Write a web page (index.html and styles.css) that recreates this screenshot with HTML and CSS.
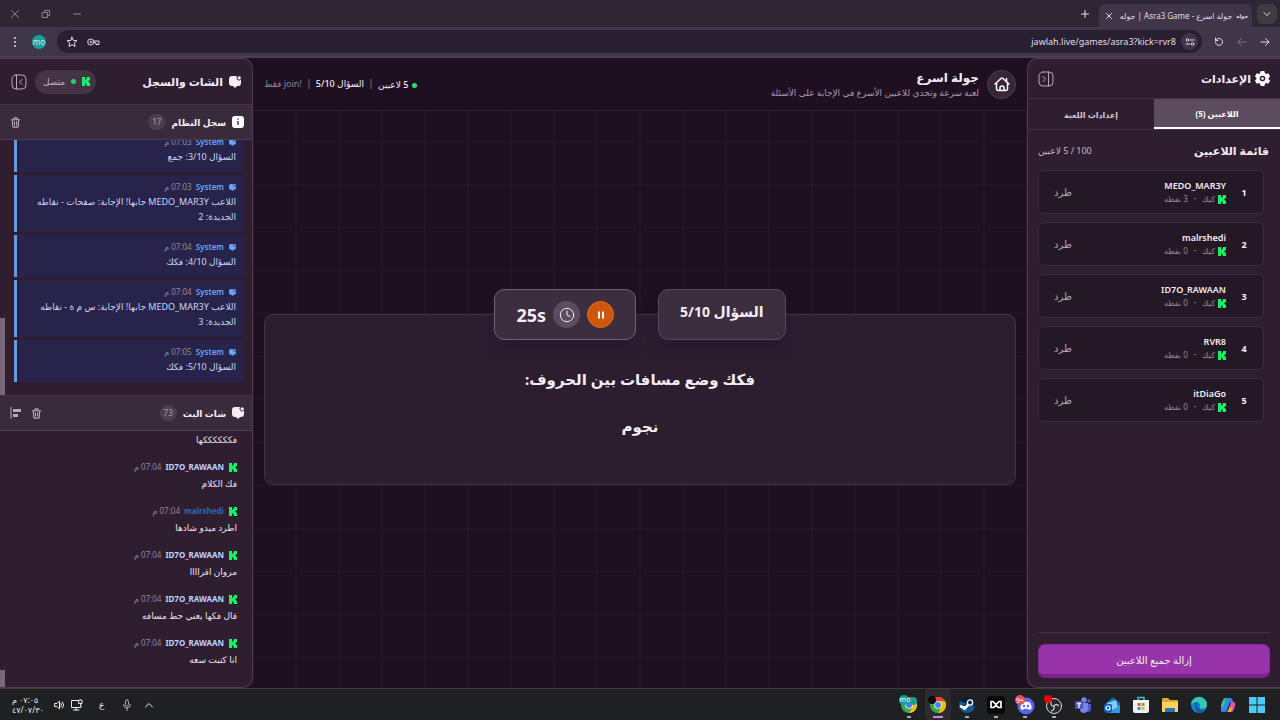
FILE: index.html
```html
<!DOCTYPE html>
<html lang="ar" dir="rtl">

<head>
    <meta charset="UTF-8">
    <meta name="viewport" content="width=device-width, initial-scale=1.0">
    <title>جولة اسرع - Asra3 Game | جوله</title>
    <link rel="stylesheet" href="styles.css">
</head>

<body>
    <!-- shared icons -->
    <svg class="defs" width="0" height="0" aria-hidden="true">
        <symbol id="kick" viewBox="0 0 9 10"><path fill="#19f065" d="M0 0h3.500v3h1V1.500h1V0H9v3.500H8v1H7v1h1v1h1V10H5.500V8.500h-1V7h-1v3H0z"/></symbol>
        <symbol id="chat" viewBox="0 0 12 12"><path fill="currentColor" d="M3 0h5.200a2.600 2.600 0 0 0 1 4.200q1.300.6 2.800-.4V7a3 3 0 0 1-3 3H8l-2 2-2-2H3a3 3 0 0 1-3-3V3a3 3 0 0 1 3-3z"/><circle cx="10.200" cy="1.900" r="1.700" fill="currentColor"/></symbol>
        <symbol id="trash" viewBox="0 0 12 12"><path fill="none" stroke="currentColor" stroke-width="1.200" stroke-linecap="round" stroke-linejoin="round" d="M1.500 3h9M4 3l.5-2h3L8 3M2.500 3l.5 7.200q.1.800 1 .8h4q.9 0 1-.8L9.500 3M4.800 5.300v3.400M7.200 5.300v3.400"/></symbol>
        <symbol id="chrome" viewBox="0 0 18 18"><circle cx="9" cy="9" r="9" fill="#34a853"/><path fill="#ea4335" d="M1.200 4.500A9 9 0 0 1 16.800 4.500L9 5 5.500 11z"/><path fill="#fbbc05" d="M16.800 4.500A9 9 0 0 1 9 18l4-7L9 5z"/><circle cx="9" cy="9" r="4.300" fill="#fff"/><circle cx="9" cy="9" r="3.400" fill="#4285f4"/></symbol>
    </svg>

    <div class="tabstrip">
        <button class="tab-search" aria-label="Search tabs"><svg width="10" height="10" viewBox="0 0 10 10"><path d="M2 3.500l3 3 3-3"/></svg></button>
        <div class="tab">
            <span class="favicon">جوله</span>
            <span class="tab-title">جولة اسرع - Asra3 Game | جوله</span>
            <button aria-label="Close tab"><svg width="8" height="8" viewBox="0 0 8 8"><path d="M1.500 1.500l5 5M6.500 1.500l-5 5"/></svg></button>
        </div>
        <button class="new-tab" aria-label="New tab"><svg width="10" height="10" viewBox="0 0 10 10"><path d="M5 1.500v7M1.500 5h7"/></svg></button>
        <div class="window-controls">
            <button aria-label="Minimize"><svg width="10" height="10" viewBox="0 0 10 10"><path d="M1.500 5h7"/></svg></button>
            <button aria-label="Restore"><svg width="10" height="10" viewBox="0 0 10 10"><path d="M1.500 3.500h5v5h-5zM3.500 3.500v-2h5v5h-2"/></svg></button>
            <button aria-label="Close"><svg width="10" height="10" viewBox="0 0 10 10"><path d="M1.500 1.500l7 7M8.500 1.500l-7 7"/></svg></button>
        </div>
    </div>

    <div class="toolbar">
        <button aria-label="Back"><svg width="10" height="10" viewBox="0 0 10 10"><path d="M1 5h8M5.500 1.500L9 5 5.500 8.500"/></svg></button>
        <button class="dim" aria-label="Forward"><svg width="10" height="10" viewBox="0 0 10 10"><path d="M9 5H1M4.500 1.500L1 5l3.500 3.500"/></svg></button>
        <button aria-label="Reload"><svg width="10" height="10" viewBox="0 0 10 10"><path d="M1.500 5a3.500 3.500 0 1 0 1.200-2.700L1.500 3.500M1.500 1v2.500H4"/></svg></button>
        <div class="omnibox">
            <button class="site-info" aria-label="Site information"><svg width="10" height="10" viewBox="0 0 10 10"><circle cx="2.500" cy="3" r="1.300"/><path d="M5.500 3H9M1 7h3.500"/><circle cx="7.500" cy="7" r="1.300"/></svg></button>
            <input type="text" class="url" dir="ltr" aria-label="Address" value="jawlah.live/games/asra3?kick=rvr8">
            <button aria-label="Passwords"><svg width="13" height="10" viewBox="0 0 13 10"><circle cx="3.700" cy="5" r="3"/><circle cx="3.700" cy="5" r=".7"/><path d="M6.500 4H12v3.500H9V5.800H6.700"/></svg></button>
            <button aria-label="Bookmark"><svg width="12" height="12" viewBox="0 0 12 12"><path d="M6 1.200l1.400 3.200 3.500.3-2.600 2.300.8 3.500L6 8.700l-3.100 1.800.8-3.500L1.100 4.700l3.500-.3z"/></svg></button>
        </div>
        <button class="profile" aria-label="Profile">mo</button>
        <button aria-label="Menu"><svg width="10" height="12" viewBox="0 0 10 12"><path class="dots" d="M5 2v.01M5 6v.01M5 10v.01"/></svg></button>
    </div>

    <div class="app">
        <aside class="settings">
            <div class="settings-head">
                <svg width="15" height="15" viewBox="0 0 16 16"><path fill="#fff" fill-rule="evenodd" d="M6 0h4l.6 2.400 1.200.7 2.300-.7 2 3.500L14.400 7.500v1l1.700 1.600-2 3.500-2.300-.7-1.200.7L10 16H6l-.6-2.400-1.200-.7-2.300.7-2-3.500L1.600 8.500v-1L-.1 5.900l2-3.500 2.300.7 1.200-.7zM8 5a3 3 0 1 0 0 6 3 3 0 0 0 0-6z"/><circle cx="8" cy="8" r="1.400" fill="#fff"/></svg>
                <h2>الإعدادات</h2>
                <button class="collapse" aria-label="طي الإعدادات"><svg width="16" height="16" viewBox="0 0 16 16"><rect x="1" y="1" width="14" height="14" rx="4"/><path d="M10.500 1v14M5 5.500L7.500 8 5 10.500"/></svg></button>
            </div>
            <div class="settings-tabs">
                <button class="active">اللاعبين (5)</button>
                <button>إعدادات اللعبة</button>
            </div>
            <div class="players-head">
                <h3>قائمة اللاعبين</h3>
                <span>100 / 5 لاعبين</span>
            </div>
            <ul class="players">
                <li><b>1</b><div><strong>MEDO_MAR3Y</strong><p><svg width="8" height="9"><use href="#kick"/></svg>كيك <i>•</i> 3 نقطة</p></div><button>طرد</button></li>
                <li><b>2</b><div><strong>malrshedi</strong><p><svg width="8" height="9"><use href="#kick"/></svg>كيك <i>•</i> 0 نقطة</p></div><button>طرد</button></li>
                <li><b>3</b><div><strong>ID7O_RAWAAN</strong><p><svg width="8" height="9"><use href="#kick"/></svg>كيك <i>•</i> 0 نقطة</p></div><button>طرد</button></li>
                <li><b>4</b><div><strong>RVR8</strong><p><svg width="8" height="9"><use href="#kick"/></svg>كيك <i>•</i> 0 نقطة</p></div><button>طرد</button></li>
                <li><b>5</b><div><strong>itDiaGo</strong><p><svg width="8" height="9"><use href="#kick"/></svg>كيك <i>•</i> 0 نقطة</p></div><button>طرد</button></li>
            </ul>
            <div class="settings-foot">
                <button>إزالة جميع اللاعبين</button>
            </div>
        </aside>

        <main class="game">
            <header class="game-head">
                <a href="#" class="home" aria-label="الرئيسية"><svg width="16" height="16" viewBox="0 0 16 16"><path d="M1 8l6-5.500q1-.9 2 0L15 8M2.500 7v5.500q0 2 2 2h7q2 0 2-2V7M12.500 5.500v-3M6 14.500V12q0-2 2-2t2 2v2.500"/></svg></a>
                <div class="game-title">
                    <h1>جولة اسرع</h1>
                    <p>لعبة سرعة وتحدي للاعبين الأسرع في الإجابة على الأسئلة</p>
                </div>
                <div class="status">
                    <span class="online">5 لاعبين</span>
                    <span>السؤال 5/10</span>
                    <span class="muted"><bdi dir="ltr">join!</bdi> فقط</span>
                </div>
            </header>
            <div class="stage">
                <section class="question">
                    <div class="badges">
                        <div class="badge">السؤال 5/10</div>
                        <div class="badge timer">
                            <button class="pause" aria-label="إيقاف"><svg width="8" height="8" viewBox="0 0 8 8"><path d="M1 .5h2v7H1zM5 .5h2v7H5z"/></svg></button>
                            <span class="clock"><svg width="16" height="16" viewBox="0 0 16 16"><circle cx="8" cy="8" r="6.700"/><path d="M8 4v4l3 1.500"/></svg></span>
                            <span class="seconds" dir="ltr">25s</span>
                        </div>
                    </div>
                    <p>فكك وضع مسافات بين الحروف:</p>
                    <p>نجوم</p>
                </section>
            </div>
        </main>

        <aside class="chat">
            <div class="chat-head">
                <svg width="12" height="12"><use href="#chat"/></svg>
                <h2>الشات والسجل</h2>
                <span class="connected"><svg width="8" height="9"><use href="#kick"/></svg><i></i>متصل</span>
                <button class="collapse" aria-label="طي الشات"><svg width="16" height="16" viewBox="0 0 16 16"><rect x="1" y="1" width="14" height="14" rx="4"/><path d="M5.500 1v14M11 5.500L8.500 8l2.500 2.500"/></svg></button>
            </div>
            <div class="section-head">
                <svg width="12" height="12" viewBox="0 0 12 12"><rect width="12" height="12" rx="3" fill="#fff"/><path stroke="#4a3a4c" stroke-width="1.500" d="M6 5v4M6 2.500v1.300"/></svg>
                <h3>سجل النظام</h3>
                <span class="count">17</span>
                <button aria-label="مسح السجل"><svg width="11" height="11"><use href="#trash"/></svg></button>
            </div>
            <div class="log">
                <article><h4><svg width="7" height="7"><use href="#chat"/></svg>System <time>07:03 م</time></h4><p>السؤال 3/10: جمع</p></article>
                <article><h4><svg width="7" height="7"><use href="#chat"/></svg>System <time>07:03 م</time></h4><p>اللاعب MEDO_MAR3Y جابها! الإجابة: صفحات - نقاطه الجديدة: 2</p></article>
                <article><h4><svg width="7" height="7"><use href="#chat"/></svg>System <time>07:04 م</time></h4><p>السؤال 4/10: فكك</p></article>
                <article><h4><svg width="7" height="7"><use href="#chat"/></svg>System <time>07:04 م</time></h4><p>اللاعب MEDO_MAR3Y جابها! الإجابة: س م ة - نقاطه الجديدة: 3</p></article>
                <article><h4><svg width="7" height="7"><use href="#chat"/></svg>System <time>07:05 م</time></h4><p>السؤال 5/10: فكك</p></article>
            </div>
            <div class="section-head">
                <svg width="12" height="12"><use href="#chat"/></svg>
                <h3>شات البث</h3>
                <span class="count">73</span>
                <button aria-label="مسح الشات"><svg width="11" height="11"><use href="#trash"/></svg></button>
                <button aria-label="محاذاة"><svg width="12" height="12" viewBox="0 0 12 12"><path stroke="currentColor" d="M1 0v12"/><path stroke="currentColor" stroke-width="3" d="M3 3.500h8M3 8.500h5"/></svg></button>
            </div>
            <div class="messages">
                <p>فككككككها</p>
                <article><h4><svg width="8" height="9"><use href="#kick"/></svg>ID7O_RAWAAN <time>07:04 م</time></h4><p>فك الكلام</p></article>
                <article><h4 class="blue"><svg width="8" height="9"><use href="#kick"/></svg>malrshedi <time>07:04 م</time></h4><p>اطرد ميدو شادها</p></article>
                <article><h4><svg width="8" height="9"><use href="#kick"/></svg>ID7O_RAWAAN <time>07:04 م</time></h4><p>مروان اقراااا</p></article>
                <article><h4><svg width="8" height="9"><use href="#kick"/></svg>ID7O_RAWAAN <time>07:04 م</time></h4><p>قال فكها يعني حط مسافه</p></article>
                <article><h4><svg width="8" height="9"><use href="#kick"/></svg>ID7O_RAWAAN <time>07:04 م</time></h4><p>انا كتبت سعه</p></article>
            </div>
        </aside>
    </div>

    <footer class="taskbar">
        <div class="apps">
            <button aria-label="Start"><svg width="18" height="18" viewBox="0 0 18 18"><path fill="#4cc9f5" d="M1 1h7.500v7.500H1zM9.500 1H17v7.500H9.500zM1 9.500h7.500V17H1zM9.500 9.500H17V17H9.500z"/></svg></button>
            <button aria-label="Copilot"><svg width="18" height="18" viewBox="0 0 18 18"><path fill="#2a8be8" d="M6 2h5q2 0 2.500 2l.5 2h-3L8 14q-.6 2-2.500 2H4q-3 0-2-4l2-7q.6-3 2-3z"/><path fill="#3fc28c" d="M2 9l2-5q1-2 3-2L5 9q-1 3-3 2z"/><path fill="#e557a5" d="M12 16H7q2 0 2.500-2L12 6h2q3 0 2 4l-1.500 4q-.6 2-2.500 2z"/><path fill="#f7a945" d="M7 16q2 0 2.500-2l.8-2.500H13L12 16z"/></svg></button>
            <button aria-label="Edge"><svg width="18" height="18" viewBox="0 0 18 18"><circle cx="9" cy="9" r="8" fill="#1480ca"/><path fill="#37c6b2" d="M1 9a8 8 0 0 1 16-.5q0 4-4.500 4-3 0-2.500-1.500Q11 9 9 7 5 4 1 9z"/><path fill="#115ba8" d="M5 10q0-3 3-4-2 3 0 6 2.500 3 7 1.500Q13 17 9 17q-4-2-4-7z"/></svg></button>
            <button aria-label="Files"><svg width="18" height="18" viewBox="0 0 18 18"><path fill="#e6a52b" d="M1 3q0-1 1-1h5l2 2h7q1 0 1 1v5H1z"/><path fill="#fbd35d" d="M1 6h16v9q0 1-1 1H2q-1 0-1-1z"/><path fill="#2476b8" d="M4 16v-3q0-1 1-1h8q1 0 1 1v3z"/></svg></button>
            <button aria-label="Store"><svg width="18" height="18" viewBox="0 0 18 18"><path fill="none" stroke="#48b8dc" stroke-width="1.500" d="M6 5V1.500h6V5"/><path fill="#f1f1ef" d="M1 4h16v11q0 2-2 2H3q-2 0-2-2z"/><path fill="#e8502f" d="M5.500 7h3v3h-3z"/><path fill="#70ad35" d="M9.500 7h3v3h-3z"/><path fill="#279bd4" d="M5.500 11h3v3h-3z"/><path fill="#efb528" d="M9.500 11h3v3h-3z"/></svg></button>
            <button aria-label="Outlook"><svg width="18" height="18" viewBox="0 0 18 18"><path fill="#1d68bd" d="M2 8l7-6q1-1 2 0l6 5v10H3z"/><path fill="#80cff5" d="M4 7l9-3 2 7-7 4z"/><path fill="#2e9be7" d="M7 17l10-8v6q0 2-2 2z"/><rect x="1" y="8" width="8" height="8" rx="1.500" fill="#155fb6"/><circle cx="5" cy="12" r="2" fill="none" stroke="#fff" stroke-width="1.200"/></svg></button>
            <button aria-label="Teams"><svg width="18" height="18" viewBox="0 0 18 18"><circle cx="10" cy="4" r="2.700" fill="#7b83eb"/><circle cx="15" cy="5" r="1.800" fill="#5059c9"/><path fill="#5059c9" d="M12 8h5v5q0 3-4 3z"/><path fill="#7b83eb" d="M6 7h8v6q-1 4-4 4-4 0-4-4z"/><rect x="1" y="5" width="8" height="8" rx="1" fill="#4b53bc"/><path stroke="#fff" stroke-width="1.300" d="M3 7.500h4M5 7.500V12"/></svg></button>
            <button class="open" aria-label="OBS"><svg width="20" height="20" viewBox="0 0 20 20"><circle cx="10" cy="11" r="7.500" fill="#272727" stroke="#ddd"/><path fill="none" stroke="#ccc" stroke-width="1.300" d="M10 11q-4 0-3-5M10 11q2-3 5 0M10 11q1 4-3 5"/><circle cx="4" cy="4" r="4" fill="#ed0000"/></svg></button>
            <button class="open" aria-label="Discord"><svg width="20" height="20" viewBox="0 0 20 20"><circle cx="11" cy="11" r="8.500" fill="#5865f2"/><path fill="#fff" d="M7 7.500q4-1.500 8 0 2 3 1.500 6.500L14 15l-1-1.300H9L8 15l-2.500-1Q5 11 7 7.500z"/><circle cx="9" cy="11" r="1.200" fill="#5865f2"/><circle cx="13" cy="11" r="1.200" fill="#5865f2"/><circle cx="5" cy="5" r="5" fill="#e44b5c"/><text x="5" y="8" class="notice">9+</text></svg></button>
            <button class="open" aria-label="Mask"><svg width="18" height="18" viewBox="0 0 18 18"><rect width="18" height="18" rx="4" fill="#080808"/><path fill="none" stroke="#fff" stroke-width="1.700" stroke-linejoin="round" d="M4 5.500h2l3 3 3-3h2v6h-2.500L9 9.500l-2.500 2H4z"/></svg></button>
            <button class="open" aria-label="Steam"><svg width="18" height="18" viewBox="0 0 18 18"><circle cx="9" cy="9" r="8" fill="#145a91"/><path fill="#0d1d3c" d="M2 5a8 8 0 0 1 15 5z"/><path stroke="#fff" stroke-width="2.500" d="M2 10l5 2 4-4"/><circle cx="12" cy="6.500" r="2.600" fill="#0d1d3c" stroke="#fff" stroke-width="1.300"/><circle cx="6.500" cy="12" r="2" fill="#fff"/></svg></button>
            <button class="open current" aria-label="Chrome"><svg width="20" height="20" viewBox="0 0 20 20"><use href="#chrome" x="2" y="2" width="16" height="16"/><circle cx="4" cy="5" r="4" fill="#080808"/></svg></button>
            <button class="open" aria-label="Chrome mo"><svg width="20" height="20" viewBox="0 0 20 20"><use href="#chrome" x="2" y="2" width="16" height="16"/><circle cx="5" cy="5" r="5" fill="#1a9e94"/><circle cx="14" cy="6" r="4" fill="#1a9e94"/><text x="6" y="7" class="notice">mo</text></svg></button>
        </div>
        <div class="tray">
            <button aria-label="Hidden icons"><svg width="10" height="10" viewBox="0 0 10 10"><path d="M1.500 7L5 3.500 8.500 7"/></svg></button>
            <button class="mic" aria-label="Microphone"><svg width="10" height="12" viewBox="0 0 10 12"><rect x="3.500" y="1" width="3" height="6" rx="1.500"/><path d="M1.500 5.500q0 3.500 3.500 3.500t3.500-3.500M5 9v2.500"/></svg></button>
            <button class="lang">ع</button>
            <button class="net" aria-label="Network"><svg width="13" height="12" viewBox="0 0 13 12"><path d="M8 1.500H1.500v7H11V6M9 1h3v3.500H9zM3.500 11H9M6 8.500V11M10.500 4.500V6"/></svg></button>
            <button aria-label="Volume"><svg width="11" height="10" viewBox="0 0 11 10"><path d="M1 3.500h2L5.500 1v8L3 6.500H1zM7 3.500q1 1.500 0 3M8.500 2q2.500 3 0 6"/></svg></button>
            <div class="date"><span>٠٧:٠٥ م</span><span>٤٧/٠٧/٣٠</span></div>
        </div>
    </footer>
</body>

</html>
```

FILE: styles.css
```css
* {
    box-sizing: border-box;
}

body {
    margin: 0;
    height: 100vh;
    display: flex;
    flex-direction: column;
    overflow: hidden;
    background-color: #1f1021;
    color: #f4eef5;
    font-family: "Noto Sans", "DejaVu Sans", sans-serif;
    font-size: 9px;
}

h1,
h2,
h3,
h4,
p,
ul {
    margin: 0;
    padding: 0;
}

button {
    display: flex;
    align-items: center;
    justify-content: center;
    padding: 0;
    border: none;
    background: none;
    color: inherit;
    font: inherit;
}

svg {
    flex: none;
}

.defs {
    position: absolute;
}

/* browser window */
.tabstrip {
    display: flex;
    align-items: center;
    height: 27px;
    padding: 0 3px 0 8px;
    background-color: #2e2733;
    color: #e3dce6;
}

.tabstrip svg,
.toolbar svg,
.tray svg,
.collapse svg,
.home svg,
.clock svg {
    fill: none;
    stroke: currentColor;
    stroke-linecap: round;
    stroke-linejoin: round;
}

.tab-search {
    width: 20px;
    height: 20px;
    border-radius: 6px;
    background-color: #3e3b42;
}

.tab {
    display: flex;
    align-items: center;
    width: 153px;
    height: 23px;
    margin: 4px 5px 0 0;
    padding: 0 4px;
    border-radius: 7px 7px 0 0;
    background-color: #40364a;
    white-space: nowrap;
}

.tab button {
    width: 12px;
}

.favicon {
    font-size: 5px;
    font-weight: bold;
}

.tab-title {
    flex: 1;
    padding-right: 4px;
    font-size: 8px;
}

.new-tab {
    width: 16px;
    margin-right: 6px;
}

.window-controls {
    display: flex;
    gap: 18px;
    margin-right: auto;
    color: #8c8591;
}

.window-controls button {
    width: 13px;
}

.toolbar {
    display: flex;
    align-items: center;
    height: 31px;
    padding: 0 9px;
    gap: 11px;
    background-color: #40364a;
    border-bottom: 2px solid #4a3e51;
    color: #e3dce6;
}

.toolbar > button {
    width: 12px;
    height: 20px;
}

.toolbar .dim {
    color: #7b7084;
}

.toolbar .profile {
    width: 14px;
    height: 14px;
    border-radius: 50%;
    background-color: #16a39a;
    font-size: 8px;
}

.dots {
    stroke-width: 2;
}

.omnibox {
    flex: 1;
    display: flex;
    align-items: center;
    gap: 5px;
    height: 23px;
    padding: 0 4px 0 9px;
    border-radius: 12px;
    background-color: #281f31;
}

.omnibox button + button {
    margin-right: 4px;
}

.site-info {
    width: 17px;
    height: 17px;
    border-radius: 50%;
    background-color: #40364a;
}

.url {
    flex: 1;
    min-width: 0;
    padding: 0;
    border: none;
    outline: none;
    background: none;
    color: #e3dce6;
    font: inherit;
    text-align: right;
}

/* game page */
.app {
    flex: 1;
    min-height: 0;
    display: grid;
    grid-template-columns: 253px 1fr 253px;
}

.settings,
.chat {
    display: flex;
    flex-direction: column;
    min-height: 0;
    overflow: hidden;
    background-color: #2e1e30;
    border: 1px solid #4d3d4f;
}

.settings {
    border-right: none;
    border-radius: 10px 0 0 10px;
}

.chat {
    border-left: none;
    border-radius: 0 10px 10px 0;
}

.settings h2,
.chat h2 {
    font-size: 11px;
}

.settings-head {
    display: flex;
    align-items: center;
    gap: 4px;
    height: 39px;
    padding: 0 10px;
}

.collapse {
    margin-right: auto;
    color: #b5a9b8;
}

.settings-tabs {
    display: grid;
    grid-template-columns: 1fr 1fr;
    height: 32px;
    border-top: 1px solid #423243;
    border-bottom: 1px solid #423243;
}

.settings-tabs button {
    color: #d0c5d2;
    font-size: 8px;
    font-weight: bold;
}

.settings-tabs .active {
    background-color: #5c4c5d;
    border-bottom: 2px solid #fff;
    color: #fff;
}

.players-head {
    display: flex;
    align-items: center;
    justify-content: space-between;
    height: 40px;
    padding: 0 11px 0 10px;
}

.players-head h3 {
    font-size: 11px;
}

.players-head span {
    color: #c5b9c7;
}

.players {
    flex: 1;
    display: flex;
    flex-direction: column;
    gap: 8px;
    padding: 0 16px 0 10px;
    list-style: none;
}

.players li {
    display: flex;
    align-items: center;
    height: 44px;
    padding: 0 12px 0 15px;
    border: 1px solid #3b2b3c;
    border-radius: 6px;
    background-color: #251826;
}

.players li > b {
    width: 14px;
    text-align: center;
}

.players li > div {
    margin-right: 11px;
}

.players li > button {
    margin-right: auto;
    color: #b3a8b5;
    font-size: 10px;
}

.players strong {
    display: block;
    font-weight: 600;
    line-height: 14px;
}

.players p {
    display: flex;
    align-items: center;
    gap: 3px;
    color: #94889a;
    font-size: 8px;
    line-height: 12px;
}

.players i {
    padding: 0 3px;
    font-size: 6px;
    font-style: normal;
}

.settings-foot {
    margin: 0 10px;
    padding: 11px 0 9px;
    border-top: 1px solid #423243;
}

.settings-foot button {
    width: 100%;
    height: 34px;
    border-radius: 7px;
    border: 1px solid #842a9b;
    border-bottom: 4px solid #7a238c;
    background-color: #9834a9;
    font-size: 10px;
}

.game {
    display: flex;
    flex-direction: column;
    min-width: 0;
}

.game-head {
    display: flex;
    align-items: center;
    height: 53px;
    padding: 0 11px;
    border-bottom: 1px solid #302033;
}

.home {
    display: flex;
    align-items: center;
    justify-content: center;
    width: 29px;
    height: 29px;
    border: 1px solid #4e3e51;
    border-radius: 50%;
    background-color: #362638;
    color: #fff;
}

.home svg {
    stroke-width: 1.5;
}

.game-title {
    margin-right: 8px;
}

.game-title h1 {
    font-size: 12px;
    line-height: 17px;
}

.game-title p {
    color: #a699ab;
    line-height: 13px;
}

.status {
    display: flex;
    align-items: center;
    margin-right: auto;
    font-weight: 500;
}

.status span + span {
    margin-right: 6px;
    padding-right: 6px;
    border-right: 2px solid #49394b;
    line-height: 10px;
}

.status .muted {
    color: #8f8293;
    font-weight: normal;
}

.online::before {
    content: "";
    display: inline-block;
    width: 5px;
    height: 5px;
    margin-left: 4px;
    border-radius: 50%;
    background-color: #22e36b;
    vertical-align: middle;
}

.stage {
    flex: 1;
    display: flex;
    flex-direction: column;
    justify-content: center;
    padding: 0 11px;
    background-image: linear-gradient(to right, transparent 21px, #29192c 21px, #29192c 22px, transparent 22px), linear-gradient(transparent 21px, #241427 21px, #241427 22px, transparent 22px);
    background-position: center;
    background-size: 43px 43px;
}

.question {
    height: 171px;
    border: 1px solid #433345;
    border-radius: 9px;
    background-color: #2c1d2f;
    text-align: center;
}

.question p {
    margin-bottom: 23px;
    font-size: 15px;
    font-weight: bold;
    line-height: 24px;
}

.badges {
    display: flex;
    justify-content: center;
    gap: 22px;
    margin-top: -26px;
    margin-bottom: 27px;
}

.badge {
    height: 51px;
    padding: 0 21px;
    border: 1px solid #57475a;
    border-radius: 10px;
    background-color: #3c2d3f;
    box-shadow: 0 10px 14px -4px #22142580;
    font-size: 14px;
    font-weight: bold;
    line-height: 44px;
}

.timer {
    display: flex;
    align-items: center;
    gap: 7px;
    border-color: #706073;
}

.pause,
.clock {
    display: flex;
    align-items: center;
    justify-content: center;
    width: 27px;
    height: 27px;
    border-radius: 50%;
    background-color: #5b4c5f;
}

.pause {
    border: 1px solid #e66e1c;
    background-color: #cf560c;
}

.pause svg {
    fill: #fff;
}

.seconds {
    font-size: 18px;
}

/* chat and log */
.chat-head {
    display: flex;
    align-items: center;
    gap: 6px;
    height: 45px;
    padding: 0 11px;
}

.connected {
    display: flex;
    align-items: center;
    gap: 6px;
    height: 24px;
    margin-right: auto;
    padding: 0 6px 0 8px;
    border-radius: 12px;
    background-color: #443445;
    color: #c0b4c2;
}

.connected i {
    width: 5px;
    height: 5px;
    border-radius: 50%;
    background-color: #3fc567;
}

.chat-head .collapse {
    margin-right: 2px;
}

.section-head {
    display: flex;
    align-items: center;
    gap: 6px;
    flex: none;
    height: 36px;
    padding: 0 8px;
    border-top: 1px solid #433344;
    border-bottom: 1px solid #4b3b4c;
    background-color: #3a2b3c;
}

.section-head h3 {
    font-size: 9px;
}

.section-head button {
    width: 15px;
    color: #b8abba;
}

.count {
    min-width: 16px;
    margin-left: auto;
    padding: 0 4px;
    border-radius: 9px;
    background-color: #4d3e4f;
    color: #a99cac;
    font-size: 8px;
    line-height: 16px;
    text-align: center;
}

.log,
.messages {
    display: flex;
    flex-direction: column;
    justify-content: flex-end;
    min-height: 0;
    overflow: hidden;
    border-left: 5px solid transparent;
}

.log {
    height: 255px;
    flex: none;
    gap: 3px;
    padding: 0 8px 13px 9px;
    border-image: linear-gradient(transparent 178px, #776979 178px) 1;
    border-width: 0 0 0 5px;
}

.messages {
    flex: 1;
    padding: 0 15px 14px 0;
    border-image: linear-gradient(transparent 238px, #776979 238px) 1;
    border-width: 0 0 0 5px;
}

.chat h4 {
    display: flex;
    align-items: center;
    gap: 4px;
    color: #bdd5ff;
    font-size: 8px;
    line-height: 12px;
}

.chat h4 svg {
    margin-left: 1px;
}

.chat time {
    color: #93869a;
    font-weight: normal;
}

.log article {
    flex: none;
    padding: 6px 8px 8px 10px;
    border-left: 3px solid #609ce8;
    border-radius: 0 3px 3px 0;
    background-color: #28234a;
}

.log h4 {
    color: #69a5f5;
    font-weight: 600;
}

.log p {
    margin-top: 1px;
    color: #c7d7f5;
    line-height: 15px;
}

.messages article {
    flex: none;
    height: 44px;
    padding-top: 8px;
}

.messages .blue {
    color: #2e67b2;
}

.messages p {
    margin-top: 3px;
    color: #eae2ec;
    line-height: 16px;
}

.messages > p {
    flex: none;
    margin-bottom: 5px;
}

/* taskbar */
.taskbar {
    display: flex;
    justify-content: space-between;
    height: 32px;
    flex: none;
    padding: 0 10px 0 12px;
    border-top: 1px solid #403943;
    background-color: #1e2022;
}

.apps {
    display: flex;
    gap: 3px;
}

.apps button {
    width: 26px;
    border-radius: 3px;
}

.apps .open {
    background-image: linear-gradient(#aaa, #aaa);
    background-repeat: no-repeat;
    background-position: center 27px;
    background-size: 4px 2px;
}

.apps .current {
    background-color: #2d2b2f;
    background-image: linear-gradient(#c88bd0, #c88bd0);
    background-size: 10px 2px;
}

.notice {
    direction: ltr;
    fill: #fff;
    font-size: 7px;
    text-anchor: middle;
}

.tray {
    display: flex;
    align-items: center;
    color: #eee;
}

.mic {
    margin-right: 12px;
    color: #c3a3c8;
}

.lang {
    width: 14px;
    margin-right: 13px;
}

.net {
    margin-right: 12px;
    margin-left: 5px;
}

.date {
    display: flex;
    flex-direction: column;
    margin-right: 10px;
    font-size: 8px;
    line-height: 10px;
}

.date span {
    text-align: left;
}
```
